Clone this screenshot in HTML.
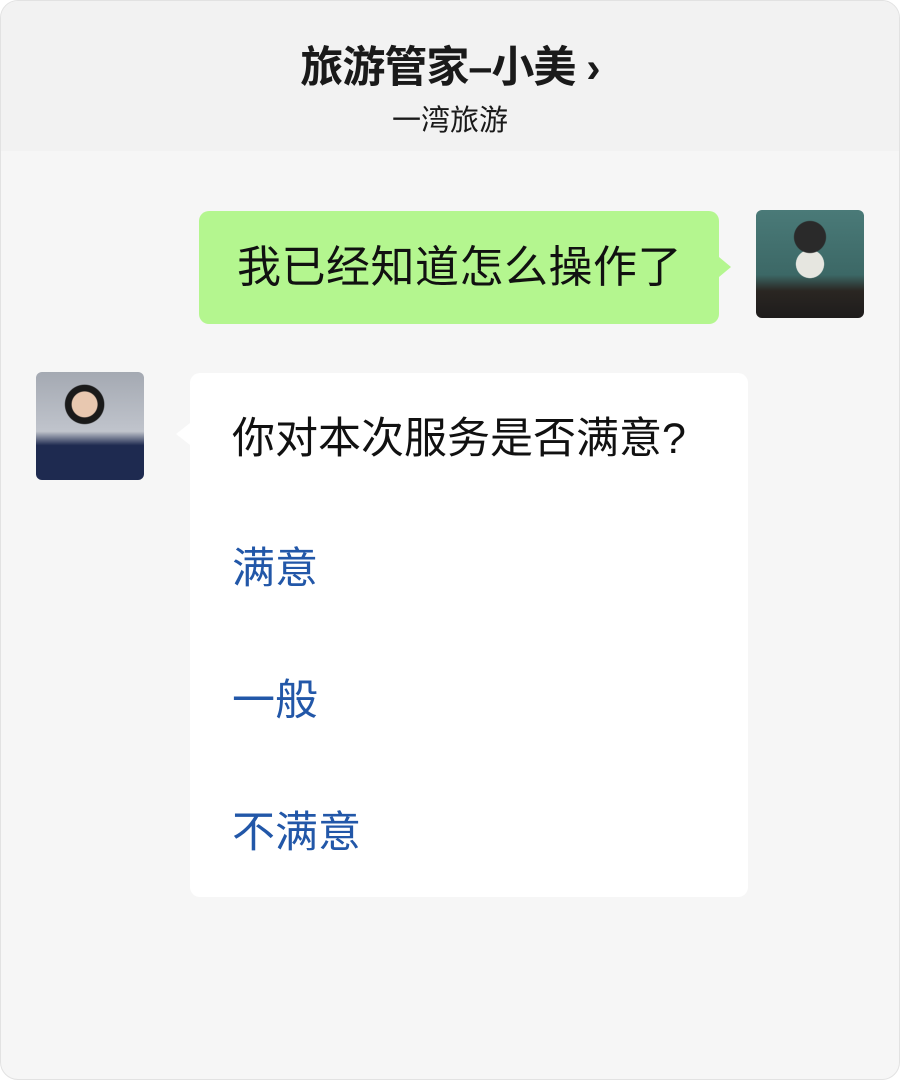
<!DOCTYPE html>
<html><head><meta charset="utf-8"><style>
body{margin:0;width:900px;height:1080px;background:#fff;font-family:"Liberation Sans","Noto Sans CJK SC",sans-serif;position:relative;overflow:hidden}
.frame{position:absolute;left:0;top:0;width:898px;height:1078px;border:1px solid #e2e2e2;border-radius:18px;background:#f6f6f6;overflow:hidden}
.hdr{position:absolute;left:0;top:0;width:100%;height:150px;background:#f2f2f2}
.t1{position:absolute;top:32px;width:100%;text-align:center;font-size:43px;font-weight:bold;color:#1a1a1a;letter-spacing:-1px}
.t2{position:absolute;top:96px;width:100%;text-align:center;font-size:29px;color:#1a1a1a}
.b1{position:absolute;left:198px;top:210px;width:520px;height:113px;background:#b4f68f;border-radius:10px;font-size:44px;color:#111;line-height:113px;text-indent:38px;letter-spacing:0.5px}
.b1:after{content:"";position:absolute;right:-12px;top:46px;border:10px solid transparent;border-left-color:#b4f68f;border-right:0;border-width:10px 0 10px 12px}
.av{position:absolute;width:108px;height:108px;border-radius:6px}
.b2{position:absolute;left:189px;top:372px;width:558px;height:524px;background:#fff;border-radius:10px}
.b2:after{content:"";position:absolute;left:-14px;top:50px;border-style:solid;border-color:transparent #fff transparent transparent;border-width:11px 14px 11px 0}
.q{position:absolute;left:42px;font-size:43px;color:#111}
.o{position:absolute;left:42px;font-size:43px;color:#2257a8}
</style></head><body>
<div class="frame">
<div class="hdr"><div class="t1">旅游管家–小美 ›</div><div class="t2">一湾旅游</div></div>
<div class="b1">我已经知道怎么操作了</div>
<div class="av" style="left:755px;top:209px;background:radial-gradient(circle at 50% 25%,#2a2a2a 0 16%,transparent 17%),radial-gradient(ellipse at 50% 50%,#e6e6e0 0 18%,transparent 19%),linear-gradient(180deg,#4a7a78 0%,#3c6866 60%,#2a2622 75%,#1e1c1c 100%)"></div>
<div class="av" style="left:35px;top:371px;background:radial-gradient(circle at 45% 30%,#e8c8b0 0 13%,#1a1a1a 14% 20%,transparent 21%),linear-gradient(180deg,#a4a9b2 0%,#c0c4cc 55%,#1e2a50 68%,#1e2a50 100%)"></div>
<div class="b2">
<div class="q" style="top:31px">你对本次服务是否满意?</div>
<div class="o" style="top:161px">满意</div>
<div class="o" style="top:293px">一般</div>
<div class="o" style="top:425px">不满意</div>
</div>
</div>
</body></html>
